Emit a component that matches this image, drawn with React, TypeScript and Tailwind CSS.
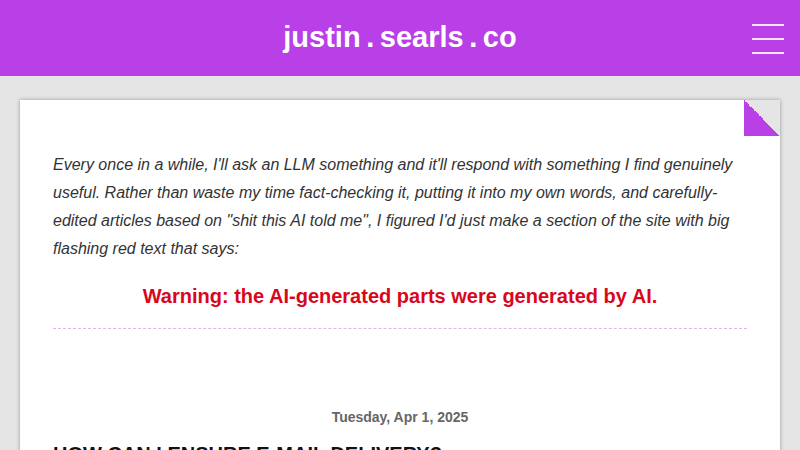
export default function App() {
  return (
    <div className="min-h-[450px] bg-[#e5e5e5] font-['Liberation_Sans',Arial,sans-serif]">
      <header className="relative h-[76px] bg-[#b840e6] flex items-center justify-center">
        <h1 className="text-white font-bold text-[29px] leading-none [word-spacing:-2.5px] -mt-[2px]">justin . searls . co</h1>
        <div className="absolute right-[16px] top-[24px] w-[32px] flex flex-col gap-[12px]">
          <div className="h-[2px] bg-[#f3e3fb]" />
          <div className="h-[2px] bg-[#f3e3fb]" />
          <div className="h-[2px] bg-[#f3e3fb]" />
        </div>
      </header>
      <main className="px-[20px] pt-[24px]">
        <article className="relative bg-white shadow-[0_0_4px_rgba(0,0,0,0.35)] px-[33px] h-[400px] overflow-hidden">
          <div className="absolute top-0 right-0 w-[36px] h-[36px] bg-[linear-gradient(to_top_right,#b840e6_50%,#e5e5e5_50%)]" />
          <div className="pt-[51px]">
            <p className="italic text-[16px] leading-[28px] text-[#333]">
              Every once in a while, I'll ask an LLM something and it'll respond with something I find genuinely useful. Rather than waste my time fact-checking it, putting it into my own words, and carefully-edited articles based on "shit this AI told me", I figured I'd just make a section of the site with big flashing red text that says:
            </p>
            <div className="mt-[19px] pb-[18px] border-b border-dashed border-[#dcb6ec]">
              <p className="text-center font-bold text-[20px] leading-[28px] text-[#d9071c]">
                Warning: the AI-generated parts were generated by AI.
              </p>
            </div>
            <p className="mt-[78px] text-center font-bold text-[14px] leading-[20px] text-[#666]">Tuesday, Apr 1, 2025</p>
            <h2 className="mt-[13px] font-bold text-[20px] leading-[28px] text-[#111] uppercase">How can I ensure e-mail delivery?</h2>
          </div>
        </article>
      </main>
    </div>
  );
}
